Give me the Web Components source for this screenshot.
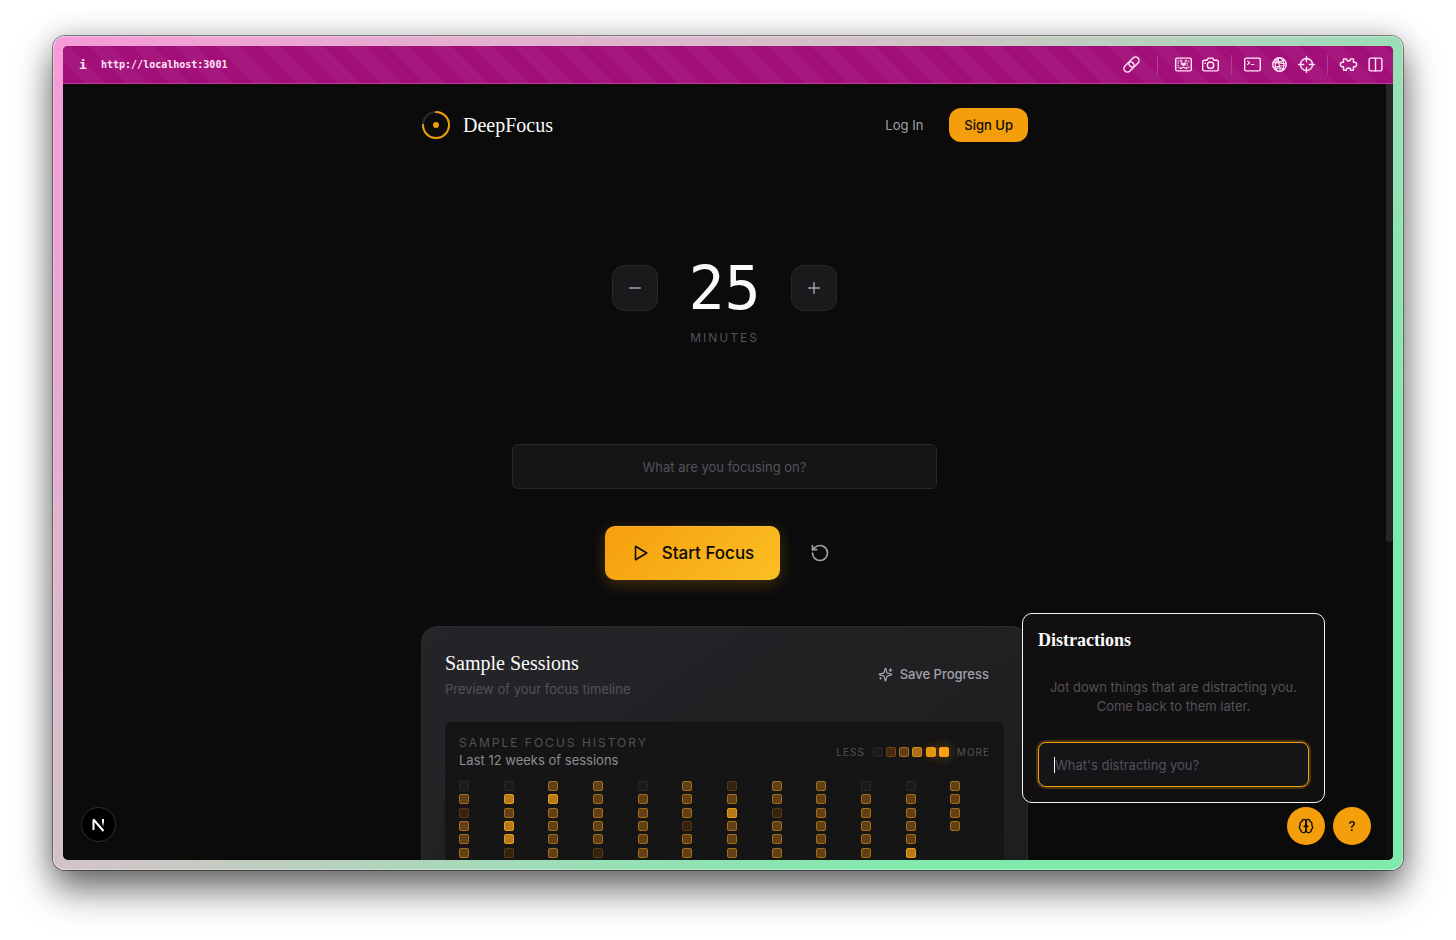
<!DOCTYPE html>
<html lang="en">
<head>
<meta charset="utf-8">
<title>DeepFocus</title>
<style>
  body {
    margin: 0;
    min-height: 100vh;
    box-sizing: border-box;
    padding: 36px 53px 70px;
    display: flex;
    background: #fff;
    font-family: Inter, "Liberation Sans", sans-serif;
    --amber: #f59e0b;
    --muted: #52525b;
    --text: #fafafa;
    --serif: "Liberation Serif", serif;
  }
</style>
</head>
<body>

<browser-window url="http://localhost:3001">
  <focus-app></focus-app>
</browser-window>

<script>
// 24x24 stroke icons
const icons = {
  link: '<g transform="rotate(-45 12 12)"><rect x="-1" y="7" width="16" height="10" rx="5"/><rect x="9" y="7" width="16" height="10" rx="5"/></g>',
  capture: '<rect x="1" y="3" width="22" height="18" rx="2"/><path stroke-width="1.500" stroke-dasharray="1 2" d="M4 7h4M4 10h3M4 13h3M4 16h4M16 7h4M17 10h3M17 13h3M16 16h4"/><path stroke-width="1.500" d="M8 6l2 1M16 6l-2 1M7 18l5-2 5 2"/><path fill="currentColor" stroke-width="1" d="M9 9l3 1.500L15 9v3l-3 2-3-2z"/>',
  camera: '<path d="M3 6h4l2-3h6l2 3h4a2 2 0 0 1 2 2v11a2 2 0 0 1-2 2H3a2 2 0 0 1-2-2V8a2 2 0 0 1 2-2z"/><circle cx="12" cy="13" r="4.500"/><path d="M4 10h1"/>',
  terminal: '<rect x="1" y="3" width="22" height="18" rx="2"/><path stroke-width="1.500" d="M5 7l3 2.500-3 2.500M10 12h4"/>',
  globe: '<circle cx="12" cy="12" r="9.500"/><path stroke-width="1.500" d="M3 9l18 2M3 16l17-3M10 3l3 18M5 5c5 4 10 4 14 1M6 19c3-3 8-3 12 0M11 3c-6 5-7 12-2 18M13 3c6 4 7 12 2 18"/>',
  target: '<circle cx="12" cy="12" r="8.500"/><path d="M12 1v7M12 16v7M1 12h7M16 12h7"/>',
  puzzle: '<path d="M5 4h4c0 4 6 4 6 0h4v5c6-2 6 8 0 6v5h-4c0-4-6-4-6 0H5v-5c-6 2-6-8 0-6z"/>',
  split: '<rect x="3" y="3" width="18" height="18" rx="2"/><path d="M12 3v18"/>',
  minus: '<path d="M5 12h14"/>',
  plus: '<path d="M5 12h14M12 5v14"/>',
  play: '<path d="M6 3l15 9-15 9z"/>',
  reset: '<path d="M3 12a9 9 0 1 0 9-9 9.750 9.750 0 0 0-6.740 2.740L3 8"/><path d="M3 3v5h5"/>',
  sparkles: '<path d="M9.940 15.500A2 2 0 0 0 8.500 14.060l-6.140-1.580a.5.5 0 0 1 0-.96L8.500 9.940A2 2 0 0 0 9.940 8.500l1.580-6.140a.5.5 0 0 1 .96 0l1.580 6.140a2 2 0 0 0 1.440 1.440l6.140 1.580a.5.5 0 0 1 0 .96l-6.140 1.580a2 2 0 0 0-1.440 1.440l-1.580 6.140a.5.5 0 0 1-.96 0z"/><path d="M20 3v4M22 5h-4M4 17v2M5 18H3"/>',
  brain: '<path d="M12 5a3 3 0 1 0-5.997.125 4 4 0 0 0-2.526 5.770 4 4 0 0 0 .556 6.588A4 4 0 1 0 12 18Z"/><path d="M12 5a3 3 0 1 1 5.997.125 4 4 0 0 1 2.526 5.770 4 4 0 0 1-.556 6.588A4 4 0 1 1 12 18Z"/><path d="M15 13a4.500 4.500 0 0 1-3-4 4.500 4.500 0 0 1-3 4"/>'
};

class LineIcon extends HTMLElement {
  connectedCallback() {
    const root = this.attachShadow({ mode: 'open' });
    root.innerHTML = /*html*/`
      <style>
        :host { display: inline-flex; width: 16px; height: 16px; flex: none; }
        svg { width: 100%; height: 100%; overflow: visible; }
      </style>
      <svg viewBox="0 0 24 24" fill="none" stroke="currentColor" aria-hidden="true"
        stroke-width="2" stroke-linecap="round" stroke-linejoin="round">
        ${icons[this.getAttribute('name')]}
      </svg>
    `;
  }
}
customElements.define('line-icon', LineIcon);


class BrowserWindow extends HTMLElement {
  connectedCallback() {
    const root = this.attachShadow({ mode: 'open' });
    root.innerHTML = /*html*/`
      <style>
        :host {
          flex: 1;
          display: flex;
          box-sizing: border-box;
          padding: 10px;
          border-radius: 12px;
          background: linear-gradient(135deg, #f79ad8, #cfc6c6 41%, #98dfb5 63%, #80eaac 78%);
          box-shadow:
            inset 0 0 0 1px rgba(255, 255, 255, .35),
            0 0 0 1px rgba(0, 0, 0, .45),
            0 20px 36px rgba(0, 0, 0, .55),
            0 0 30px rgba(0, 0, 0, .2);
        }

        .inner {
          flex: 1;
          display: flex;
          flex-direction: column;
          border-radius: 5px;
          overflow: hidden;
          background: #0b0b0c;
        }

        header {
          display: flex;
          align-items: center;
          box-sizing: border-box;
          height: 38px;
          padding: 0 9px 0 16px;
          color: #ffe6f8;
          background: repeating-linear-gradient(45deg, #a20f79 0 15px, #a5197e 15px 30px);
          border-bottom: 1px solid #c0399b;
        }

        .info {
          width: 22px;
          font: bold 13px "DejaVu Sans Mono", monospace;
        }

        .url {
          flex: 1;
          font: bold 10px "DejaVu Sans Mono", monospace;
        }

        .tools { display: flex; align-items: center; }

        button {
          display: flex;
          padding: 0;
          border: 0;
          background: none;
          color: inherit;
        }

        line-icon { width: 17px; height: 17px; }

        .group { display: flex; gap: 10px; }

        .rule {
          width: 1px;
          height: 19px;
          margin: 0 12px;
          background: #b53c94;
        }

        .rule.wide { margin: 0 17px; }
      </style>
      <div class="inner">
        <header>
          <span class="info">i</span>
          <span class="url"></span>
          <div class="tools">
            <button aria-label="Copy link"><line-icon name="link"></line-icon></button>
            <span class="rule wide"></span>
            <div class="group">
              <button aria-label="Capture"><line-icon name="capture"></line-icon></button>
              <button aria-label="Camera"><line-icon name="camera"></line-icon></button>
            </div>
            <span class="rule"></span>
            <div class="group">
              <button aria-label="Console"><line-icon name="terminal"></line-icon></button>
              <button aria-label="Network"><line-icon name="globe"></line-icon></button>
              <button aria-label="Inspect"><line-icon name="target"></line-icon></button>
            </div>
            <span class="rule"></span>
            <div class="group">
              <button aria-label="Extensions"><line-icon name="puzzle"></line-icon></button>
              <button aria-label="Split view"><line-icon name="split"></line-icon></button>
            </div>
          </div>
        </header>
        <slot></slot>
      </div>
    `;
    root.querySelector('.url').textContent = this.getAttribute('url');
  }
}
customElements.define('browser-window', BrowserWindow);


class SiteHeader extends HTMLElement {
  connectedCallback() {
    this.attachShadow({ mode: 'open' }).innerHTML = /*html*/`
      <style>
        :host { display: flex; align-items: center; height: 34px; }

        .brand {
          flex: 1;
          display: flex;
          align-items: center;
          gap: 12px;
          color: var(--text);
          font: 20px var(--serif);
          text-decoration: none;
        }

        .brand svg { width: 30px; height: 30px; }

        .login {
          padding: 0 26px;
          font-size: 13px;
          color: #a1a1aa;
          text-decoration: none;
        }

        .signup {
          padding: 0 15px;
          line-height: 34px;
          border-radius: 12px;
          font-size: 13px;
          font-weight: 500;
          color: #0a0a0b;
          background: var(--amber);
          text-decoration: none;
        }
      </style>
      <a class="brand" href="#">
        <svg viewBox="0 0 30 30" fill="none" stroke-width="2" aria-hidden="true">
          <circle cx="15" cy="15" r="13" stroke="#2c2c31"/>
          <path d="M15 2a13 13 0 1 1-13 13" stroke="#f59e0b" stroke-linecap="round"/>
          <circle cx="15" cy="15" r="3" fill="#f59e0b"/>
        </svg>
        DeepFocus
      </a>
      <a class="login" href="#">Log In</a>
      <a class="signup" href="#">Sign Up</a>
    `;
  }
}
customElements.define('site-header', SiteHeader);


class FocusTimer extends HTMLElement {
  connectedCallback() {
    this.attachShadow({ mode: 'open' }).innerHTML = /*html*/`
      <style>
        :host {
          display: flex;
          flex-direction: column;
          align-items: center;
        }

        button { font: inherit; cursor: pointer; }

        .stepper {
          display: flex;
          align-items: center;
          gap: 30px;
        }

        .step {
          display: flex;
          align-items: center;
          justify-content: center;
          width: 46px;
          height: 46px;
          padding: 0;
          border: 1px solid #28282b;
          border-radius: 12px;
          color: #a1a1aa;
          background: #1a1a1c;
        }

        .step line-icon { width: 18px; height: 18px; }

        output {
          font: 60px/72px "DejaVu Sans Mono", monospace;
          color: var(--text);
        }

        .unit {
          margin-top: 6px;
          font-size: 12px;
          line-height: 16px;
          letter-spacing: 2px;
          color: var(--muted);
        }

        input {
          box-sizing: border-box;
          width: 70%;
          height: 45px;
          margin-top: 98px;
          border: 1px solid #29292c;
          border-radius: 6px;
          background: #151516;
          color: var(--text);
          font: 13px Inter, sans-serif;
          text-align: center;
        }

        input::placeholder { color: var(--muted); }

        .actions {
          display: flex;
          align-items: center;
          gap: 16px;
          margin-top: 37px;
        }

        .start {
          display: flex;
          align-items: center;
          gap: 13px;
          height: 54px;
          padding: 0 26px;
          border: 0;
          border-radius: 10px;
          background: linear-gradient(135deg, #f59e0b, #fbbf24);
          box-shadow: 0 4px 16px rgba(245, 158, 11, .25), inset 0 1px 0 rgba(255, 255, 255, .12);
          color: #0a0a0b;
          font-size: 17px;
          font-weight: 500;
        }

        .start line-icon { width: 18px; height: 18px; }

        .reset {
          display: flex;
          padding: 14px;
          border: 0;
          background: none;
          color: #a1a1aa;
        }

        .reset line-icon { width: 20px; height: 20px; }
      </style>
      <div class="stepper">
        <button class="step" aria-label="Less time"><line-icon name="minus"></line-icon></button>
        <output>25</output>
        <button class="step" aria-label="More time"><line-icon name="plus"></line-icon></button>
      </div>
      <div class="unit">MINUTES</div>
      <input type="text" aria-label="Focus task" placeholder="What are you focusing on?">
      <div class="actions">
        <button class="start"><line-icon name="play"></line-icon>Start Focus</button>
        <button class="reset" aria-label="Reset"><line-icon name="reset"></line-icon></button>
      </div>
    `;
  }
}
customElements.define('focus-timer', FocusTimer);


// one string per week, one digit per day: the level of focus from 0 to 5
const weeks = [
  '0212222', '0424412', '2422222', '2222212', '0222222', '2221222',
  '1242222', '2212222', '2222222', '0222222', '0222242', '2222'
];

class SessionHistory extends HTMLElement {
  connectedCallback() {
    const cell = level => `<i class="l${level}"></i>`;
    this.attachShadow({ mode: 'open' }).innerHTML = /*html*/`
      <style>
        :host {
          display: block;
          padding: 13px 14px;
          border-radius: 6px;
          background: #151516;
        }

        .top {
          display: flex;
          align-items: center;
          justify-content: space-between;
        }

        .caption {
          font-size: 12px;
          line-height: 16px;
          letter-spacing: 2px;
          color: var(--muted);
        }

        .range {
          font-size: 13px;
          line-height: 18px;
          color: #8b8b94;
        }

        .legend {
          display: flex;
          align-items: center;
          gap: 8px;
          font-size: 10px;
          letter-spacing: 1px;
          color: var(--muted);
        }

        .scale {
          display: flex;
          justify-content: space-between;
          width: 76px;
        }

        .weeks {
          display: grid;
          grid-template-columns: repeat(12, 1fr);
          column-gap: 5px;
          margin-top: 12px;
        }

        .week {
          display: grid;
          grid-template-rows: repeat(7, 10px);
          align-content: space-between;
          height: 90px;
        }

        i {
          box-sizing: border-box;
          width: 10px;
          height: 10px;
          border: 1px solid;
          border-radius: 2px;
        }

        .l0 { background: #1b1b1d; border-color: #28282b; }
        .l1 { background: #35230f; border-color: #573a13; }
        .l2 { background: #614015; border-color: #a56d17; }
        .l3 { background: #a56e17; border-color: #d48d18; }
        .l4 { background: #b57a1a; border-color: #f09c13; }
        .scale .l1 { background: #412a0e; border-color: #6e4812; }
        .scale .l4 { background: #e5970f; border-color: #f59e0b; box-shadow: 0 0 8px rgba(245, 158, 11, .25); }
        .l5 { background: #f9a013; border-color: #f9a013; box-shadow: 0 0 12px rgba(245, 158, 11, .45); }
      </style>
      <div class="top">
        <div>
          <div class="caption">SAMPLE FOCUS HISTORY</div>
          <div class="range">Last 12 weeks of sessions</div>
        </div>
        <div class="legend">
          <span>LESS</span>
          <span class="scale">${[0, 1, 2, 3, 4, 5].map(cell).join('')}</span>
          <span>MORE</span>
        </div>
      </div>
      <div class="weeks">
        ${weeks.map(days => `<div class="week">${[...days].map(cell).join('')}</div>`).join('')}
      </div>
    `;
  }
}
customElements.define('session-history', SessionHistory);


class SessionCard extends HTMLElement {
  connectedCallback() {
    this.attachShadow({ mode: 'open' }).innerHTML = /*html*/`
      <style>
        :host {
          display: block;
          padding: 23px;
          border: 1px solid #2b2b2e;
          border-radius: 16px;
          background: linear-gradient(145deg, #252529, #1d1d1f);
        }

        .head {
          display: flex;
          align-items: center;
          justify-content: space-between;
          margin-bottom: 24px;
        }

        h2 {
          margin: 0;
          font: 20px/26px var(--serif);
          color: var(--text);
        }

        p {
          margin: 4px 0 0;
          font-size: 13px;
          line-height: 18px;
          color: var(--muted);
        }

        button {
          display: flex;
          align-items: center;
          gap: 7px;
          padding: 8px 15px;
          border: 0;
          background: none;
          color: #a1a1aa;
          font: 500 13px Inter, sans-serif;
        }

        button line-icon { width: 15px; height: 15px; }
      </style>
      <div class="head">
        <div>
          <h2>Sample Sessions</h2>
          <p>Preview of your focus timeline</p>
        </div>
        <button><line-icon name="sparkles"></line-icon>Save Progress</button>
      </div>
      <session-history></session-history>
    `;
  }
}
customElements.define('session-card', SessionCard);


class DistractionPanel extends HTMLElement {
  connectedCallback() {
    const root = this.attachShadow({ mode: 'open' });
    root.innerHTML = /*html*/`
      <style>
        :host {
          display: block;
          box-sizing: border-box;
          width: 303px;
          padding: 15px;
          border: 1px solid #f4f4f5;
          border-radius: 10px;
          background: #110f0f;
        }

        h3 {
          margin: 0;
          font: bold 18px/22px var(--serif);
          color: var(--text);
        }

        p {
          margin: 27px 0 26px;
          font-size: 13px;
          line-height: 19px;
          text-align: center;
          color: var(--muted);
        }

        /* the gradient is the caret of the empty field */
        input {
          display: block;
          box-sizing: border-box;
          width: 100%;
          height: 45px;
          padding: 0 16px;
          border: 1px solid var(--amber);
          border-radius: 8px;
          outline: none;
          box-shadow: 0 0 0 2px rgba(245, 158, 11, .25);
          background: linear-gradient(#fff, #fff) 15px center / 1px 16px no-repeat #151517;
          color: var(--text);
          caret-color: transparent;
          font: 13px Inter, sans-serif;
        }

        input:not(:placeholder-shown) {
          background: #151517;
          caret-color: #fff;
        }

        input::placeholder { color: var(--muted); }
      </style>
      <h3>Distractions</h3>
      <p>Jot down things that are distracting you. Come back to them later.</p>
      <input type="text" aria-label="Distraction" placeholder="What's distracting you?">
    `;
    root.querySelector('input').focus();
  }
}
customElements.define('distraction-panel', DistractionPanel);


class FocusApp extends HTMLElement {
  connectedCallback() {
    this.attachShadow({ mode: 'open' }).innerHTML = /*html*/`
      <style>
        :host {
          flex: 1 1 0;
          min-height: 0;
          position: relative;
          display: flex;
          overflow: hidden;
        }

        main {
          flex: 1;
          display: flex;
          flex-direction: column;
          align-items: center;
          padding-top: 24px;
        }

        main > * { width: 100%; max-width: 607px; box-sizing: border-box; }
        focus-timer { margin-top: 110px; }
        session-card { margin-top: 46px; flex: none; }

        .scrollbar {
          width: 7px;
          background: #101012;
        }

        .scrollbar div {
          height: 59%;
          background: #27272a;
          border-radius: 0 0 4px 4px;
        }

        .dock {
          position: absolute;
          right: 22px;
          bottom: 15px;
          display: flex;
          gap: 8px;
        }

        .dock button {
          display: flex;
          align-items: center;
          justify-content: center;
          width: 38px;
          height: 38px;
          padding: 0;
          border: 0;
          border-radius: 50%;
          background: var(--amber);
          color: #0a0a0b;
          font: 500 13px Inter, sans-serif;
        }

        distraction-panel {
          position: absolute;
          right: 68px;
          bottom: 57px;
        }

        .dev {
          position: absolute;
          left: 18px;
          bottom: 18px;
          width: 35px;
          height: 35px;
          padding: 0;
          border: 1px solid #2e2e2e;
          border-radius: 50%;
          background: #000;
        }

        .dev svg { display: block; width: 100%; height: 100%; }
      </style>
      <main>
        <site-header></site-header>
        <focus-timer></focus-timer>
        <session-card></session-card>
      </main>
      <div class="scrollbar"><div></div></div>
      <button class="dev" aria-label="Dev tools">
        <svg viewBox="0 0 33 33" fill="none">
          <defs>
            <linearGradient id="fade" x1="0" y1="0" x2="0" y2="1">
              <stop offset=".3" stop-color="#fff"/>
              <stop offset="1" stop-color="#fff" stop-opacity="0"/>
            </linearGradient>
          </defs>
          <path d="M11.500 22V11.500l10 11.500" stroke="#fff" stroke-width="2" stroke-linejoin="bevel"/>
          <rect x="20" y="11" width="2" height="8" fill="url(#fade)"/>
        </svg>
      </button>
      <distraction-panel></distraction-panel>
      <div class="dock">
        <button aria-label="Distractions"><line-icon name="brain"></line-icon></button>
        <button aria-label="Help">?</button>
      </div>
    `;
  }
}
customElements.define('focus-app', FocusApp);
</script>
</body>
</html>
